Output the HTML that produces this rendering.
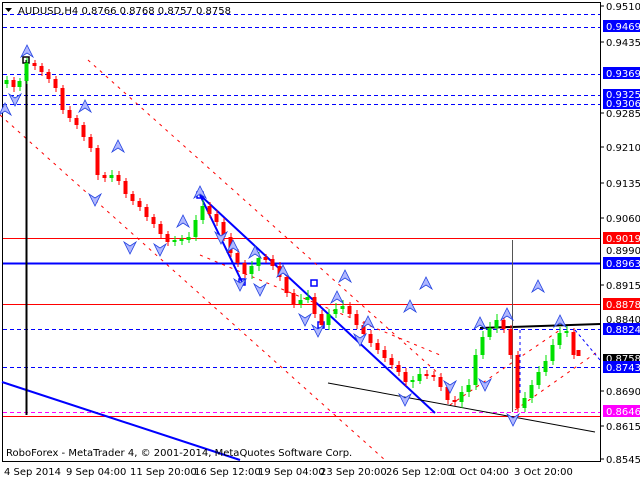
<!DOCTYPE html>
<html><head><meta charset="utf-8"><style>
html,body{margin:0;padding:0;background:#fff;width:640px;height:480px;overflow:hidden}
svg{display:block;font-family:Tahoma,"DejaVu Sans","Liberation Sans",sans-serif}
.g{fill:#00e000;width:4px}.r{fill:#ff0000;width:4px}
.gw{stroke:#00e000}.rw{stroke:#ff0000}
.u{fill:#b0b8ff;stroke:#2040e0;stroke-width:0.8}
</style></head><body>
<svg width="640" height="480" xmlns="http://www.w3.org/2000/svg">
<rect x="0" y="0" width="640" height="480" fill="#fff"/>
<rect x="2.5" y="2.5" width="598" height="459" fill="none" stroke="#000"/>
<g stroke-width="1" fill="none">
<line x1="3" y1="14.5" x2="600" y2="14.5" stroke="#0000ff" stroke-dasharray="4,3"/>
<line x1="3" y1="27.5" x2="600" y2="27.5" stroke="#0000ff" stroke-dasharray="4,3"/>
<line x1="3" y1="74.5" x2="600" y2="74.5" stroke="#0000ff" stroke-dasharray="4,3"/>
<line x1="3" y1="95.5" x2="600" y2="95.5" stroke="#0000ff" stroke-dasharray="4,3"/>
<line x1="3" y1="104.5" x2="600" y2="104.5" stroke="#0000ff" stroke-dasharray="4,3"/>
<line x1="3" y1="238.5" x2="600" y2="238.5" stroke="#ff0000"/>
<line x1="3" y1="263.5" x2="600" y2="263.5" stroke="#0000ff" stroke-width="2"/>
<line x1="3" y1="304.5" x2="600" y2="304.5" stroke="#ff0000"/>
<line x1="3" y1="329.5" x2="600" y2="329.5" stroke="#0000ff" stroke-dasharray="4,3"/>
<line x1="3" y1="367.5" x2="600" y2="367.5" stroke="#0000ff" stroke-dasharray="4,3"/>
<line x1="3" y1="412.5" x2="600" y2="412.5" stroke="#ff00ff" stroke-dasharray="4,3"/>
<line x1="3" y1="416.5" x2="600" y2="416.5" stroke="#ff0000"/>
</g>
<g fill="none">
<line x1="88" y1="60" x2="440" y2="375" stroke="#ff0000" stroke-dasharray="3,5"/>
<line x1="0" y1="115" x2="385" y2="460" stroke="#ff0000" stroke-dasharray="3,5"/>
<line x1="200" y1="255" x2="440" y2="355" stroke="#ff0000" stroke-dasharray="3,5"/>
<line x1="450" y1="405" x2="560" y2="330" stroke="#ff0000" stroke-dasharray="3,5"/>
<line x1="515" y1="410" x2="600" y2="350" stroke="#ff0000" stroke-dasharray="3,5"/>
<line x1="2" y1="382" x2="240" y2="460" stroke="#0000ff" stroke-width="2"/>
<line x1="200" y1="195" x2="435" y2="413" stroke="#0000ff" stroke-width="2"/>
<line x1="200" y1="195" x2="242" y2="282" stroke="#0000ff" stroke-width="2"/>
<line x1="328" y1="383" x2="595" y2="432" stroke="#000"/>
<line x1="480" y1="328" x2="600" y2="324" stroke="#000" stroke-width="2"/>
<line x1="26.5" y1="60" x2="26.5" y2="415" stroke="#000" stroke-width="2"/>
<line x1="512.5" y1="240" x2="512.5" y2="412" stroke="#555"/>
<line x1="520" y1="330" x2="520" y2="395" stroke="#0000ff" stroke-dasharray="3,3"/>
<line x1="575" y1="330" x2="600" y2="360" stroke="#0000ff" stroke-dasharray="3,3"/>
<rect x="23" y="57" width="6" height="6" stroke="#000" stroke-width="1.5"/>
<rect x="197" y="192" width="6" height="6" stroke="#0000ff" stroke-width="1.5"/>
<rect x="239" y="279" width="6" height="6" stroke="#0000ff" stroke-width="1.5"/>
<rect x="311" y="280" width="6" height="6" stroke="#0000ff" stroke-width="1.5"/>
<rect x="318" y="322" width="6" height="6" stroke="#0000ff" stroke-width="1.5"/>
</g>
<g stroke-width="1" transform="translate(0.5,0)">
<path class="gw" d="M6.5 76V88M19.5 78V91M26.5 58V84M111.5 170V182M174.5 236V246M181.5 235V245M188.5 232V243M195.5 215V241M202.5 200V224M251.5 261V279M258.5 252V271M300.5 294V308M307.5 290V303M328.5 309V330M335.5 303V318M342.5 300V313M412.5 376V388M419.5 368V384M461.5 386V408M468.5 379V397M475.5 349V390M482.5 331V359M489.5 322V340M496.5 314V333M524.5 392V412M531.5 380V403M538.5 366V389M545.5 355V376M552.5 339V365M559.5 327V349M566.5 326V337"/>
<path class="rw" d="M13.5 77V92M34.5 60V70M41.5 63V76M48.5 69V83M55.5 76V92M62.5 85V114M69.5 106V122M76.5 115V129M83.5 122V141M90.5 134V152M97.5 145V180M104.5 172V182M118.5 171V185M125.5 178V198M132.5 191V205M139.5 198V211M146.5 204V221M153.5 214V228M160.5 221V238M167.5 231V246M209.5 202V218M216.5 210V226M223.5 218V241M230.5 233V257M237.5 249V267M244.5 260V278M265.5 254V263M272.5 255V270M279.5 262V281M286.5 273V297M293.5 289V308M314.5 293V318M321.5 310V329M349.5 302V318M356.5 310V329M363.5 321V338M370.5 330V347M377.5 339V354M384.5 346V362M391.5 354V369M398.5 361V376M405.5 368V386M426.5 370V379M433.5 371V381M440.5 373V391M447.5 383V404M454.5 396V406M503.5 316V333M510.5 325V359M517.5 351V412M573.5 328V359"/>
</g>
<g transform="translate(-0.5,0)">
<rect class="g" x="5" y="80" width="4" height="4"/>
<rect class="r" x="12" y="80" width="4" height="7"/>
<rect class="g" x="18" y="81" width="4" height="6"/>
<rect class="g" x="25" y="63" width="4" height="18"/>
<rect class="r" x="33" y="63" width="4" height="3"/>
<rect class="r" x="40" y="66" width="4" height="6"/>
<rect class="r" x="47" y="72" width="4" height="7"/>
<rect class="r" x="54" y="79" width="4" height="9"/>
<rect class="r" x="61" y="88" width="4" height="22"/>
<rect class="r" x="68" y="110" width="4" height="8"/>
<rect class="r" x="75" y="118" width="4" height="7"/>
<rect class="r" x="82" y="125" width="4" height="12"/>
<rect class="r" x="89" y="137" width="4" height="11"/>
<rect class="r" x="96" y="148" width="4" height="27"/>
<rect class="r" x="103" y="175" width="4" height="3"/>
<rect class="g" x="110" y="175" width="4" height="3"/>
<rect class="r" x="117" y="175" width="4" height="6"/>
<rect class="r" x="124" y="181" width="4" height="13"/>
<rect class="r" x="131" y="194" width="4" height="7"/>
<rect class="r" x="138" y="201" width="4" height="6"/>
<rect class="r" x="145" y="207" width="4" height="10"/>
<rect class="r" x="152" y="217" width="4" height="7"/>
<rect class="r" x="159" y="224" width="4" height="10"/>
<rect class="r" x="166" y="234" width="4" height="8"/>
<rect class="g" x="173" y="240" width="4" height="2"/>
<rect class="g" x="180" y="239" width="4" height="2"/>
<rect class="g" x="187" y="237" width="4" height="3"/>
<rect class="g" x="194" y="220" width="4" height="17"/>
<rect class="g" x="201" y="206" width="4" height="14"/>
<rect class="r" x="208" y="206" width="4" height="8"/>
<rect class="r" x="215" y="214" width="4" height="8"/>
<rect class="r" x="222" y="222" width="4" height="15"/>
<rect class="r" x="229" y="237" width="4" height="16"/>
<rect class="r" x="236" y="253" width="4" height="10"/>
<rect class="r" x="243" y="263" width="4" height="11"/>
<rect class="g" x="250" y="266" width="4" height="8"/>
<rect class="g" x="257" y="258" width="4" height="8"/>
<rect class="r" x="264" y="257" width="4" height="3"/>
<rect class="r" x="271" y="259" width="4" height="7"/>
<rect class="r" x="278" y="266" width="4" height="11"/>
<rect class="r" x="285" y="277" width="4" height="16"/>
<rect class="r" x="292" y="293" width="4" height="11"/>
<rect class="g" x="299" y="300" width="4" height="4"/>
<rect class="g" x="306" y="297" width="4" height="3"/>
<rect class="r" x="313" y="297" width="4" height="17"/>
<rect class="r" x="320" y="314" width="4" height="11"/>
<rect class="g" x="327" y="314" width="4" height="11"/>
<rect class="g" x="334" y="309" width="4" height="5"/>
<rect class="g" x="341" y="306" width="4" height="3"/>
<rect class="r" x="348" y="306" width="4" height="8"/>
<rect class="r" x="355" y="314" width="4" height="11"/>
<rect class="r" x="362" y="325" width="4" height="9"/>
<rect class="r" x="369" y="334" width="4" height="9"/>
<rect class="r" x="376" y="343" width="4" height="7"/>
<rect class="r" x="383" y="350" width="4" height="8"/>
<rect class="r" x="390" y="358" width="4" height="7"/>
<rect class="r" x="397" y="365" width="4" height="7"/>
<rect class="r" x="404" y="372" width="4" height="10"/>
<rect class="g" x="411" y="380" width="4" height="2"/>
<rect class="g" x="418" y="374" width="4" height="7"/>
<rect class="r" x="425" y="374" width="4" height="2"/>
<rect class="r" x="432" y="375" width="4" height="2"/>
<rect class="r" x="439" y="377" width="4" height="10"/>
<rect class="r" x="446" y="387" width="4" height="13"/>
<rect class="r" x="453" y="400" width="4" height="2"/>
<rect class="g" x="460" y="392" width="4" height="10"/>
<rect class="g" x="467" y="385" width="4" height="7"/>
<rect class="g" x="474" y="355" width="4" height="30"/>
<rect class="g" x="481" y="337" width="4" height="18"/>
<rect class="g" x="488" y="328" width="4" height="9"/>
<rect class="g" x="495" y="320" width="4" height="8"/>
<rect class="r" x="502" y="320" width="4" height="9"/>
<rect class="r" x="509" y="329" width="4" height="26"/>
<rect class="r" x="516" y="355" width="4" height="53"/>
<rect class="g" x="523" y="398" width="4" height="10"/>
<rect class="g" x="530" y="385" width="4" height="13"/>
<rect class="g" x="537" y="372" width="4" height="13"/>
<rect class="g" x="544" y="361" width="4" height="11"/>
<rect class="g" x="551" y="345" width="4" height="16"/>
<rect class="g" x="558" y="333" width="4" height="12"/>
<rect class="g" x="565" y="331" width="4" height="2"/>
<rect class="r" x="572" y="332" width="4" height="23"/>
<rect class="r" x="577" y="350" width="4" height="6"/>
</g>
<g class="u">
<path d="M21 57L27 45L33 57L27 53Z"/><path d="M79 112L85 100L91 112L85 108Z"/><path d="M-1 115L5 103L11 115L5 111Z"/>
<path d="M112 152L118 140L124 152L118 148Z"/><path d="M194 198L200 186L206 198L200 194Z"/><path d="M177 227L183 215L189 227L183 223Z"/>
<path d="M227 252L233 240L239 252L233 248Z"/><path d="M249 258L255 246L261 258L255 254Z"/><path d="M277 277L283 265L289 277L283 273Z"/>
<path d="M339 282L345 270L351 282L345 278Z"/><path d="M331 303L337 291L343 303L337 299Z"/><path d="M362 328L368 316L374 328L368 324Z"/>
<path d="M404 312L410 300L416 312L410 308Z"/><path d="M420 289L426 277L432 289L426 285Z"/><path d="M474 329L480 317L486 329L480 325Z"/>
<path d="M501 320L507 308L513 320L507 316Z"/><path d="M554 327L560 315L566 327L560 323Z"/><path d="M532 292L538 280L544 292L538 288Z"/>
<path d="M9 94L15 106L21 94L15 98Z"/><path d="M89 194L95 206L101 194L95 198Z"/><path d="M124 242L130 254L136 242L130 246Z"/>
<path d="M154 244L160 256L166 244L160 248Z"/><path d="M234 279L240 291L246 279L240 283Z"/><path d="M254 284L260 296L266 284L260 288Z"/>
<path d="M299 314L305 326L311 314L305 318Z"/><path d="M312 325L318 337L324 325L318 329Z"/><path d="M354 334L360 346L366 334L360 338Z"/>
<path d="M399 394L405 406L411 394L405 398Z"/><path d="M444 381L450 393L456 381L450 385Z"/><path d="M479 379L485 391L491 379L485 383Z"/>
<path d="M507 414L513 426L519 414L513 418Z"/><path d="M215 232L221 244L227 232L221 236Z"/>
</g>
<g font-size="10" fill="#000">
<text x="606" y="10">0.9510</text>
<text x="606" y="46">0.9435</text>
<text x="606" y="117">0.9285</text>
<text x="606" y="151">0.9210</text>
<text x="606" y="187">0.9135</text>
<text x="606" y="222">0.9060</text>
<text x="606" y="254">0.8990</text>
<text x="606" y="289">0.8915</text>
<text x="606" y="323">0.8840</text>
<text x="606" y="395">0.8690</text>
<text x="606" y="430">0.8615</text>
<text x="606" y="463">0.8545</text>
</g>
<g font-size="10">
<rect x="603" y="20" width="37" height="12" fill="#0000ff"/><text x="606" y="30" fill="#fff">0.9469</text>
<rect x="603" y="67" width="37" height="12" fill="#0000ff"/><text x="606" y="77" fill="#fff">0.9369</text>
<rect x="603" y="89" width="37" height="11" fill="#0000ff"/><text x="606" y="98" fill="#fff">0.9325</text>
<rect x="603" y="98" width="37" height="11" fill="#0000ff"/><text x="606" y="107" fill="#fff">0.9306</text>
<rect x="603" y="232" width="37" height="12" fill="#ff0000"/><text x="606" y="242" fill="#fff">0.9019</text>
<rect x="603" y="257" width="37" height="12" fill="#0000ff"/><text x="606" y="267" fill="#fff">0.8963</text>
<rect x="603" y="298" width="37" height="12" fill="#ff0000"/><text x="606" y="308" fill="#fff">0.8878</text>
<rect x="603" y="323" width="37" height="12" fill="#0000ff"/><text x="606" y="333" fill="#fff">0.8824</text>
<rect x="603" y="354" width="37" height="8" fill="#000"/><text x="606" y="362" fill="#fff">0.8758</text>
<rect x="603" y="361" width="37" height="12" fill="#0000ff"/><text x="606" y="371" fill="#fff">0.8743</text>
<rect x="603" y="405" width="37" height="12" fill="#ff00ff"/><text x="606" y="415" fill="#fff">0.8646</text>
</g>
<g stroke="#000"><line x1="601" y1="6" x2="604" y2="6"/><line x1="601" y1="42" x2="604" y2="42"/><line x1="601" y1="113" x2="604" y2="113"/><line x1="601" y1="147" x2="604" y2="147"/><line x1="601" y1="183" x2="604" y2="183"/><line x1="601" y1="218" x2="604" y2="218"/><line x1="601" y1="285" x2="604" y2="285"/><line x1="601" y1="391" x2="604" y2="391"/><line x1="601" y1="426" x2="604" y2="426"/><line x1="601" y1="459" x2="604" y2="459"/></g>
<g font-size="10" fill="#000">
<text x="4" y="475">4 Sep 2014</text>
<text x="66" y="475">9 Sep 04:00</text>
<text x="130" y="475">11 Sep 20:00</text>
<text x="194" y="475">16 Sep 12:00</text>
<text x="258" y="475">19 Sep 04:00</text>
<text x="320" y="475">23 Sep 20:00</text>
<text x="386" y="475">26 Sep 12:00</text>
<text x="450" y="475">1 Oct 04:00</text>
<text x="514" y="475">3 Oct 20:00</text>
<text x="6" y="456">RoboForex - MetaTrader 4, © 2001-2014, MetaQuotes Software Corp.</text>
<polygon points="5,8 12,8 8.5,12" fill="#000"/>
<text x="18" y="14">AUDUSD,H4  0.8766 0.8768 0.8757 0.8758</text>
</g>
</svg>
</body></html>
